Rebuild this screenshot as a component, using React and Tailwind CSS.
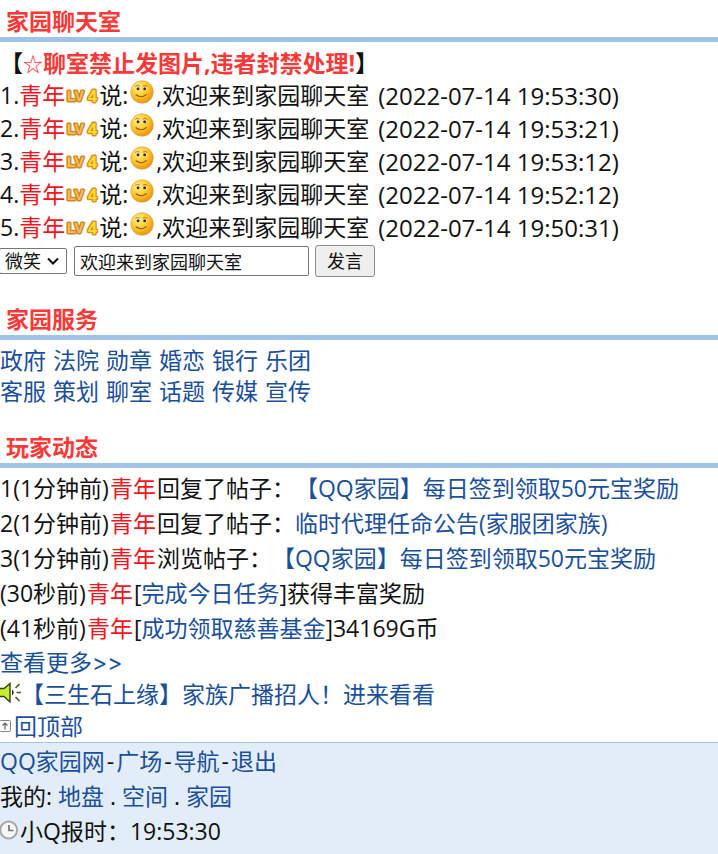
import React from 'react'

const messages = [
  { id: 1, time: '2022-07-14 19:53:30' },
  { id: 2, time: '2022-07-14 19:53:21' },
  { id: 3, time: '2022-07-14 19:53:12' },
  { id: 4, time: '2022-07-14 19:52:12' },
  { id: 5, time: '2022-07-14 19:50:31' }
]

const services = [
  ['政府', '法院', '勋章', '婚恋', '银行', '乐团'],
  ['客服', '策划', '聊室', '话题', '传媒', '宣传']
]

const feed = [
  { prefix: '1(1分钟前)', action: '回复了帖子：', link: '【QQ家园】每日签到领取50元宝奖励' },
  { prefix: '2(1分钟前)', action: '回复了帖子：', link: '临时代理任命公告(家服团家族)' },
  { prefix: '3(1分钟前)', action: '浏览帖子：', link: '【QQ家园】每日签到领取50元宝奖励' },
  { prefix: '(30秒前)', action: '[', link: '完成今日任务', suffix: ']获得丰富奖励' },
  { prefix: '(41秒前)', action: '[', link: '成功领取慈善基金', suffix: ']34169G币' }
]

const Link = ({ children }) => (
  <a href="#" className="text-[#1a4f9c] hover:underline">{children}</a>
)

const Dash = () => <span className="mx-[2px]">-</span>

const SectionTitle = ({ children }) => (
  <h2 className="border-b-[5px] border-[#a0c3e8] pt-[5px] pl-[6px] font-bold leading-[32px] text-[#f93838]">
    {children}
  </h2>
)

const LevelBadge = () => (
  <svg className="h-4 w-[34px] shrink-0" viewBox="0 0 34 16" role="img" aria-label="LV4">
    <g
      fontFamily="Liberation Sans, sans-serif"
      fontWeight="bold"
      strokeLinejoin="round"
      paintOrder="stroke"
    >
      <text x="2" y="13" fontSize="14" fill="#f5bd62" stroke="#d08a22" strokeWidth="3">LV</text>
      <text x="23" y="14" fontSize="16" fill="#ffe030" stroke="#e08e18" strokeWidth="3">4</text>
    </g>
  </svg>
)

const Smiley = () => (
  <svg className="mx-[2px] mb-2 h-6 w-6 shrink-0" viewBox="0 0 24 24" role="img" aria-label="微笑">
    <defs>
      <radialGradient id="face" cx="0.35" cy="0.3" r="0.8">
        <stop offset="0" stopColor="#fff08a" />
        <stop offset="0.5" stopColor="#fcc92e" />
        <stop offset="1" stopColor="#e8850c" />
      </radialGradient>
    </defs>
    <circle cx="12" cy="12" r="11.3" fill="url(#face)" stroke="#dc9a2c" strokeWidth="0.6" />
    <ellipse cx="7.6" cy="8.6" rx="2.2" ry="1.8" fill="#fff6d0" />
    <ellipse cx="15" cy="8.6" rx="2.2" ry="1.8" fill="#fff6d0" />
    <circle cx="8" cy="8.7" r="1.5" fill="#4a2c08" />
    <circle cx="14.7" cy="8.7" r="1.5" fill="#4a2c08" />
    <path d="M5.2 6.4 Q7.6 4.6 9.8 6.2 M12.8 6.2 Q15 4.6 17.4 6.4" fill="none" stroke="#a8741c" strokeWidth="0.9" />
    <path d="M6 14.8 Q11 18.8 16.2 14.6" fill="none" stroke="#96550c" strokeWidth="1.2" strokeLinecap="round" />
  </svg>
)

const Speaker = () => (
  <svg className="mb-[3px] h-[22px] w-[21px] shrink-0" viewBox="0 0 21 22" aria-hidden="true">
    <path d="M-1 6.5 H4 L10 1.5 V20 L4 14.5 H-1 Z" fill="#c4ee2a" stroke="#33420c" strokeWidth="1.4" />
    <path d="M12 7.5 Q15.5 10.5 12 13.5 Z" fill="#2d2d1c" />
    <path d="M15.5 6 L19.5 2 M16.5 10.5 H21 M15.5 15 L19.5 19" stroke="#55552a" strokeWidth="1.6" />
  </svg>
)

const TopIcon = () => (
  <svg className="mr-[2px] h-3 w-3 shrink-0" viewBox="0 0 12 12" aria-hidden="true">
    <rect x="-0.5" y="0.5" width="11" height="11" rx="1" fill="#f8f8f8" stroke="#858585" />
    <path d="M5 9.5 V3 M2.5 5.5 L5 3 L7.5 5.5" fill="none" stroke="#666" strokeWidth="1.2" />
  </svg>
)

const Clock = () => (
  <svg className="mb-[3px] h-5 w-5 shrink-0" viewBox="0 0 20 20" aria-hidden="true">
    <circle cx="8.7" cy="10" r="8.4" fill="#f7f7f5" stroke="#a5a9ae" strokeWidth="2" />
    <path d="M9 5 V10.5 H13.5" fill="none" stroke="#6f7478" strokeWidth="1.7" />
  </svg>
)

const ChatForm = () => (
  <form className="flex items-center pt-px text-[18px]" onSubmit={(e) => e.preventDefault()}>
    <div className="relative -ml-px">
      <select
        aria-label="表情"
        className="h-[26px] w-[68px] appearance-none rounded-[2px] border border-[#767676] bg-white pl-[5px] leading-[22px]"
      >
        <option>微笑</option>
      </select>
      <svg className="pointer-events-none absolute top-[9px] right-[8px] h-2 w-3" viewBox="0 0 12 8" aria-hidden="true">
        <path d="M1 1.5 L6 6.5 L11 1.5" fill="none" stroke="#111" strokeWidth="2" />
      </svg>
    </div>
    <input
      aria-label="聊天内容"
      defaultValue="欢迎来到家园聊天室"
      className="ml-[7px] h-[30px] w-[235px] rounded-[2px] border border-[#767676] bg-white px-[5px]"
    />
    <button
      type="submit"
      className="ml-[6px] h-8 rounded-[3px] border border-[#8a8a8a] bg-[#efefef] px-[11px] leading-[30px]"
    >
      发言
    </button>
  </form>
)

const App = () => (
  <div className="flex min-h-screen flex-col overflow-x-hidden bg-white font-['Open_Sans','Noto_Sans_CJK_SC',sans-serif] text-[23px] text-[#111] [text-spacing-trim:space-all]">
    <section>
      <SectionTitle>家园聊天室</SectionTitle>
      <p className="pt-[5px] font-bold leading-[32px]">
        【<span className="text-[#f93838]"><span className="text-[20px] leading-none font-normal">☆</span>聊室禁止发图片,违者封禁处理!</span>】
      </p>
      <ol>
        {messages.map((msg) => (
          <li key={msg.id} className="flex h-[33px] items-center whitespace-pre leading-[33px]">
            {msg.id}.<span className="text-[#f5141c]">青年</span>
            <LevelBadge />
            说:
            <Smiley />
            ,欢迎来到家园聊天室 <span className="ml-[3px] text-[24px] leading-[31px]">({msg.time})</span>
          </li>
        ))}
      </ol>
      <ChatForm />
    </section>

    <section className="mt-[21px]">
      <SectionTitle>家园服务</SectionTitle>
      <nav className="pt-[5px] leading-[31px]">
        {services.map((row) => (
          <div key={row[0]} className="flex gap-[7px]">
            {row.map((name) => <Link key={name}>{name}</Link>)}
          </div>
        ))}
      </nav>
    </section>

    <section className="mt-[19px]">
      <SectionTitle>玩家动态</SectionTitle>
      <ul className="pt-[3px] leading-[35px]">
        {feed.map((item) => (
          <li key={item.prefix}>
            {item.prefix}<span className="mx-px text-[#f5141c]">青年</span>{item.action}
            <Link>{item.link}</Link>{item.suffix}
          </li>
        ))}
      </ul>
      <p className="leading-[32px]">
        <Link>查看更多<span className="font-['Inter']">&gt;&gt;</span></Link>
      </p>
      <p className="flex items-center leading-[31px]">
        <Speaker />
        <Link>【三生石上缘】家族广播招人！进来看看</Link>
      </p>
      <p className="flex items-center leading-[32px]">
        <TopIcon />
        <Link>回顶部</Link>
      </p>
    </section>

    <footer className="flex-1 border-t border-[#a0c3e8] bg-[#e3edf8] pt-px leading-[35px]">
      <p>
        <Link>QQ家园网</Link><Dash /><Link>广场</Link><Dash /><Link>导航</Link><Dash /><Link>退出</Link>
      </p>
      <p>
        我的: <Link>地盘</Link> . <Link>空间</Link> . <Link>家园</Link>
      </p>
      <p className="flex items-center">
        <Clock />
        小Q报时：19:53:30
      </p>
    </footer>
  </div>
)

export default App
